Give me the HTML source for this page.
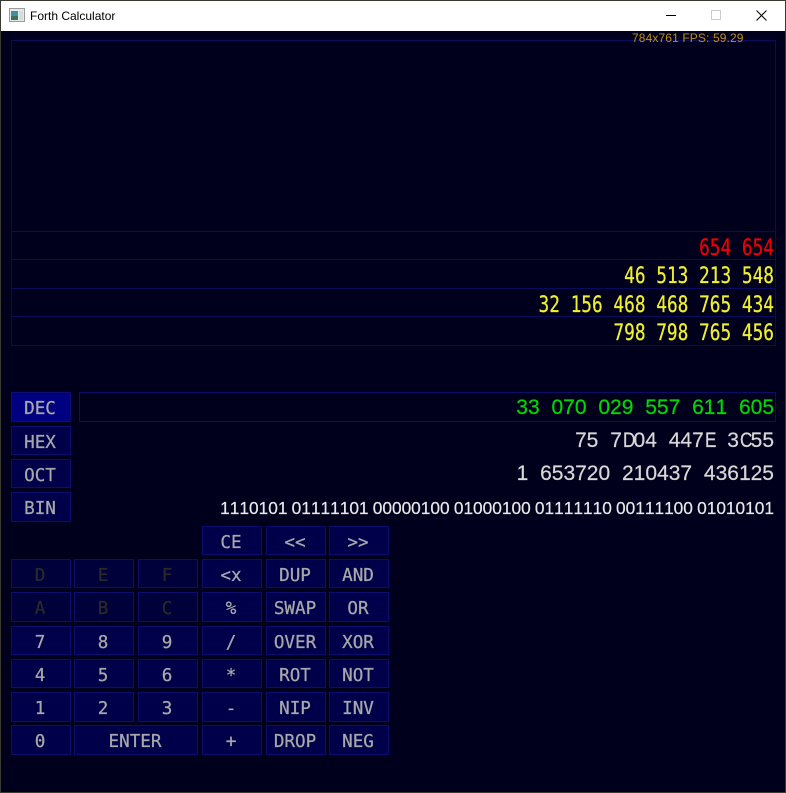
<!DOCTYPE html>
<html><head><meta charset="utf-8"><title>Forth Calculator</title>
<style>
html,body{margin:0;padding:0;background:#00001c}
#w{position:relative;width:786px;height:793px;overflow:hidden;background:#00001c}
#t{position:absolute;left:0;top:0;width:786px;height:31px;background:#fff}
#bd{position:absolute;left:0;top:0;width:784px;height:791px;border:1px solid #3a3a32;pointer-events:none}
#tt{position:absolute;left:30px;top:8px;font:12px/16px "Liberation Sans",sans-serif;color:#000}
.p{position:absolute;box-sizing:border-box;border:1px solid #0b0b5e}
.b{position:absolute;box-sizing:border-box;border:1px solid #0d0d70;background:#00004a;color:#a8a8a8;text-align:center;font:17.6px/32px "DejaVu Sans Mono",monospace;height:29px;width:60px;padding-right:2px;-webkit-text-stroke:.25px #a8a8a8}
.h{height:30px}
.d{color:#2a2a28;background:#00003a;-webkit-text-stroke:.25px #2a2a28}
.l{position:absolute;right:12px;white-space:pre;font:17.8px/28px "DejaVu Sans Mono",monospace;text-align:right;transform:scaleY(1.23);-webkit-text-stroke:.2px currentColor}
.y{color:#f0f030}
.s{position:absolute;right:12px;white-space:pre;font-family:"Liberation Sans",sans-serif;text-align:right;font-kerning:none;-webkit-text-stroke:.2px currentColor}
.n{display:inline-block;width:11.68px;text-align:center;transform:scaleX(.82)}
</style></head><body><div id="w">
<div id="t"></div>
<svg style="position:absolute;left:9px;top:8px" width="16" height="14" viewBox="0 0 16 14"><rect x=".5" y=".5" width="15" height="13" fill="#e8e8e8" stroke="#9a9a9a"/><rect x="2" y="3" width="7" height="9" fill="#3f8f9f"/><rect x="2" y="8" width="7" height="4" fill="#3a6f5a"/><rect x="10" y="3" width="4" height="9" fill="#cfe0d8"/></svg>
<div id="tt">Forth Calculator</div>
<svg style="position:absolute;left:660px;top:8px" width="120" height="16" viewBox="0 0 120 16"><path d="M6 7.5H16" stroke="#000" fill="none"/><rect x="51.500" y="2.500" width="9" height="9" fill="none" stroke="#ccc"/><path d="M96.500 2.500L106.500 12.500M106.500 2.500L96.500 12.500" stroke="#000" fill="none"/></svg>

<div class="p" style="left:11px;top:40px;width:765px;height:192px"></div>
<div class="p" style="left:11px;top:231px;width:765px;height:29px"></div>
<div class="p" style="left:11px;top:259px;width:765px;height:30px"></div>
<div class="p" style="left:11px;top:288px;width:765px;height:29px"></div>
<div class="p" style="left:11px;top:316px;width:765px;height:30px"></div>
<div style="position:absolute;left:632px;top:31px;font:12px/15px 'Liberation Sans',sans-serif;color:#c09010;white-space:pre;letter-spacing:.12px">784x761 FPS: 59.29</div>

<div class="l" style="top:235px;color:#ee0000">654 654</div>
<div class="l y" style="top:263px">46 513 213 548</div>
<div class="l y" style="top:292px">32 156 468 468 765 434</div>
<div class="l y" style="top:320px">798 798 765 456</div>

<div class="p" style="left:79px;top:392px;width:697px;height:30px;border-color:#0d0d66"></div>
<div class="s" style="top:394px;font-size:21px;line-height:28px;color:#00d800;word-spacing:6px">33 070 029 557 611 605</div>
<div class="s" style="top:427px;font-size:21px;line-height:28px;color:#d8d8d8;word-spacing:6px">75 7<span class="n">D</span>04 447<span class="n">E</span> 3<span class="n">C</span>55</div>
<div class="s" style="top:460px;font-size:21px;line-height:28px;color:#d8d8d8;word-spacing:6px">1 653720 210437 436125</div>
<div class="s" style="top:494px;font-size:17.3px;line-height:28px;color:#e8e8e8;word-spacing:-.6px">1110101 01111101 00000100 01000100 01111110 00111100 01010101</div>

<div class="b h" style="left:11px;top:392px;background:#000080">DEC</div>
<div class="b" style="left:11px;top:426px">HEX</div>
<div class="b" style="left:11px;top:459px">OCT</div>
<div class="b h" style="left:11px;top:492px">BIN</div>

<div class="b" style="left:202px;top:526px">CE</div>
<div class="b" style="left:266px;top:526px">&lt;&lt;</div>
<div class="b" style="left:329px;top:526px">&gt;&gt;</div>

<div class="b d" style="left:11px;top:559px">D</div>
<div class="b d" style="left:74px;top:559px">E</div>
<div class="b d" style="left:138px;top:559px">F</div>
<div class="b" style="left:202px;top:559px">&lt;x</div>
<div class="b" style="left:266px;top:559px">DUP</div>
<div class="b" style="left:329px;top:559px">AND</div>

<div class="b d h" style="left:11px;top:592px">A</div>
<div class="b d h" style="left:74px;top:592px">B</div>
<div class="b d h" style="left:138px;top:592px">C</div>
<div class="b h" style="left:202px;top:592px">%</div>
<div class="b h" style="left:266px;top:592px">SWAP</div>
<div class="b h" style="left:329px;top:592px">OR</div>

<div class="b" style="left:11px;top:626px">7</div>
<div class="b" style="left:74px;top:626px">8</div>
<div class="b" style="left:138px;top:626px">9</div>
<div class="b" style="left:202px;top:626px">/</div>
<div class="b" style="left:266px;top:626px">OVER</div>
<div class="b" style="left:329px;top:626px">XOR</div>

<div class="b" style="left:11px;top:659px">4</div>
<div class="b" style="left:74px;top:659px">5</div>
<div class="b" style="left:138px;top:659px">6</div>
<div class="b" style="left:202px;top:659px">*</div>
<div class="b" style="left:266px;top:659px">ROT</div>
<div class="b" style="left:329px;top:659px">NOT</div>

<div class="b h" style="left:11px;top:692px">1</div>
<div class="b h" style="left:74px;top:692px">2</div>
<div class="b h" style="left:138px;top:692px">3</div>
<div class="b h" style="left:202px;top:692px">-</div>
<div class="b h" style="left:266px;top:692px">NIP</div>
<div class="b h" style="left:329px;top:692px">INV</div>

<div class="b h" style="left:11px;top:725px">0</div>
<div class="b h" style="left:74px;top:725px;width:124px">ENTER</div>
<div class="b h" style="left:202px;top:725px">+</div>
<div class="b h" style="left:266px;top:725px">DROP</div>
<div class="b h" style="left:329px;top:725px">NEG</div>
<div id="bd"></div>
</div></body></html>
